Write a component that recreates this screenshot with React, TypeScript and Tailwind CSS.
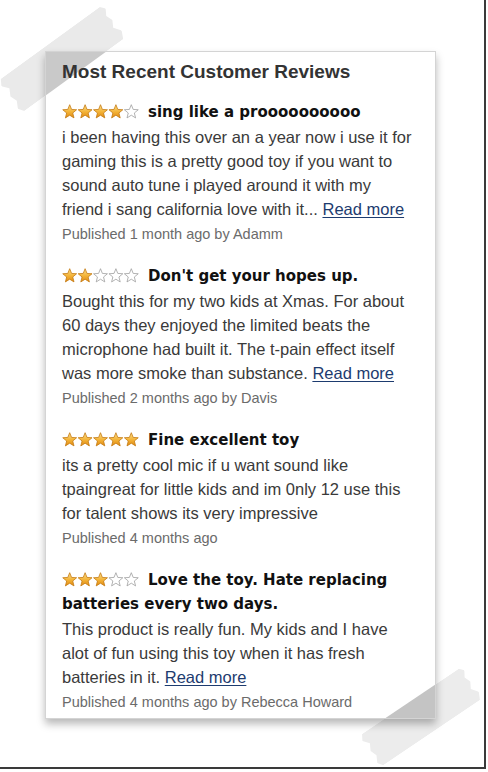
import React from 'react';

type Review = {
  rating: number;
  title: string;
  body: string;
  more: boolean;
  meta: string;
};

// Reviews shown in the widget
const reviews: Review[] = [
  {
    rating: 4,
    title: 'sing like a proooooooooo',
    body: 'i been having this over an a year now i use it for gaming this is a pretty good toy if you want to sound auto tune i played around it with my friend i sang california love with it...',
    more: true,
    meta: 'Published 1 month ago by Adamm',
  },
  {
    rating: 2,
    title: "Don't get your hopes up.",
    body: 'Bought this for my two kids at Xmas. For about 60 days they enjoyed the limited beats the microphone had built it. The t-pain effect itself was more smoke than substance.',
    more: true,
    meta: 'Published 2 months ago by Davis',
  },
  {
    rating: 5,
    title: 'Fine excellent toy',
    body: 'its a pretty cool mic if u want sound like tpaingreat for little kids and im 0nly 12 use this for talent shows its very impressive',
    more: false,
    meta: 'Published 4 months ago',
  },
  {
    rating: 3,
    title: 'Love the toy. Hate replacing batteries every two days.',
    body: 'This product is really fun. My kids and I have alot of fun using this toy when it has fresh batteries in it.',
    more: true,
    meta: 'Published 4 months ago by Rebecca Howard',
  },
];

const STAR = '7.7,0.7 9.58,5.41 14.64,5.74 10.74,8.99 11.99,13.91 7.7,11.2 3.41,13.91 4.66,8.99 0.76,5.74 5.82,5.41';

const Stars = ({ rating }: { rating: number }) => (
  <svg width="77" height="15" viewBox="0 0 77 15" className="inline-block align-[-2px] mr-[9px]">
    <defs>
      <linearGradient id="starFill" x1="0" y1="0" x2="0" y2="1">
        <stop offset="0%" stopColor="#fde08a" />
        <stop offset="55%" stopColor="#f3b236" />
        <stop offset="100%" stopColor="#e08a14" />
      </linearGradient>
    </defs>
    {[0, 1, 2, 3, 4].map((i) => (
      <polygon
        key={i}
        points={STAR}
        transform={`translate(${i * 15.4} 0)`}
        fill={i < rating ? 'url(#starFill)' : '#ffffff'}
        stroke={i < rating ? '#c47a12' : '#a0a0a0'}
        strokeWidth="0.8"
        strokeLinejoin="round"
      />
    ))}
  </svg>
);

const tapeClip =
  '[clip-path:polygon(3%_0,97%_0,100%_12%,97%_28%,99%_45%,96%_62%,100%_80%,97%_100%,3%_100%,0_86%,3%_68%,1%_50%,4%_32%,0_16%)]';

export default function App() {
  return (
    <div className="relative w-[488px] h-[772px] bg-white overflow-hidden font-['Liberation_Sans',Arial,sans-serif]">
      {/* picture frame */}
      <div className="w-[486px] h-[769px] border-r-2 border-b-2 border-[#3a3a3a] pl-[45px] pt-[51px]">
        {/* tape pieces outside the card */}
        <div className={`absolute left-[-3px] top-[39px] w-[130px] h-[40px] bg-[#eaeaea] rotate-[-36deg] ${tapeClip}`} />
        <div className={`absolute left-[359px] top-[698px] w-[124px] h-[38px] bg-[#ececec] rotate-[-34deg] ${tapeClip}`} />

        <div className="relative z-10 w-[391px] h-[668px] bg-white border border-[#d4d4d4] shadow-[0_5px_8px_rgba(0,0,0,0.28)] overflow-hidden pl-4 pr-[20px] pt-[8px]">
          {/* tape pieces over the card corners */}
          <div className="absolute left-[-49px] top-[-13px] w-[130px] h-[40px] bg-[#c9c9c9] rotate-[-36deg]" />
          <div className="absolute left-[313px] top-[646px] w-[124px] h-[38px] bg-[#c4c4c4] rotate-[-34deg]" />

          <div className="relative">
            <h2 className="text-[19px] leading-6 font-bold text-[#333] mb-4">Most Recent Customer Reviews</h2>

            {reviews.map((r) => (
              <div key={r.meta} className="mb-[18px]">
                <p className="text-[15px] leading-6 font-bold text-[#111] font-['DejaVu_Sans',Verdana,sans-serif]">
                  <Stars rating={r.rating} />
                  {r.title}
                </p>
                <p className="mt-[1px] text-[16.5px] leading-6 text-[#3a3a3a]">
                  {r.body}
                  {r.more && (
                    <>
                      {' '}
                      <a href="#" className="text-[#1d3b6f] underline underline-offset-2">
                        Read more
                      </a>
                    </>
                  )}
                </p>
                <p className="mt-[1px] text-[14.5px] leading-6 text-[#6b6b6b]">{r.meta}</p>
              </div>
            ))}
          </div>
        </div>
      </div>
    </div>
  );
}
